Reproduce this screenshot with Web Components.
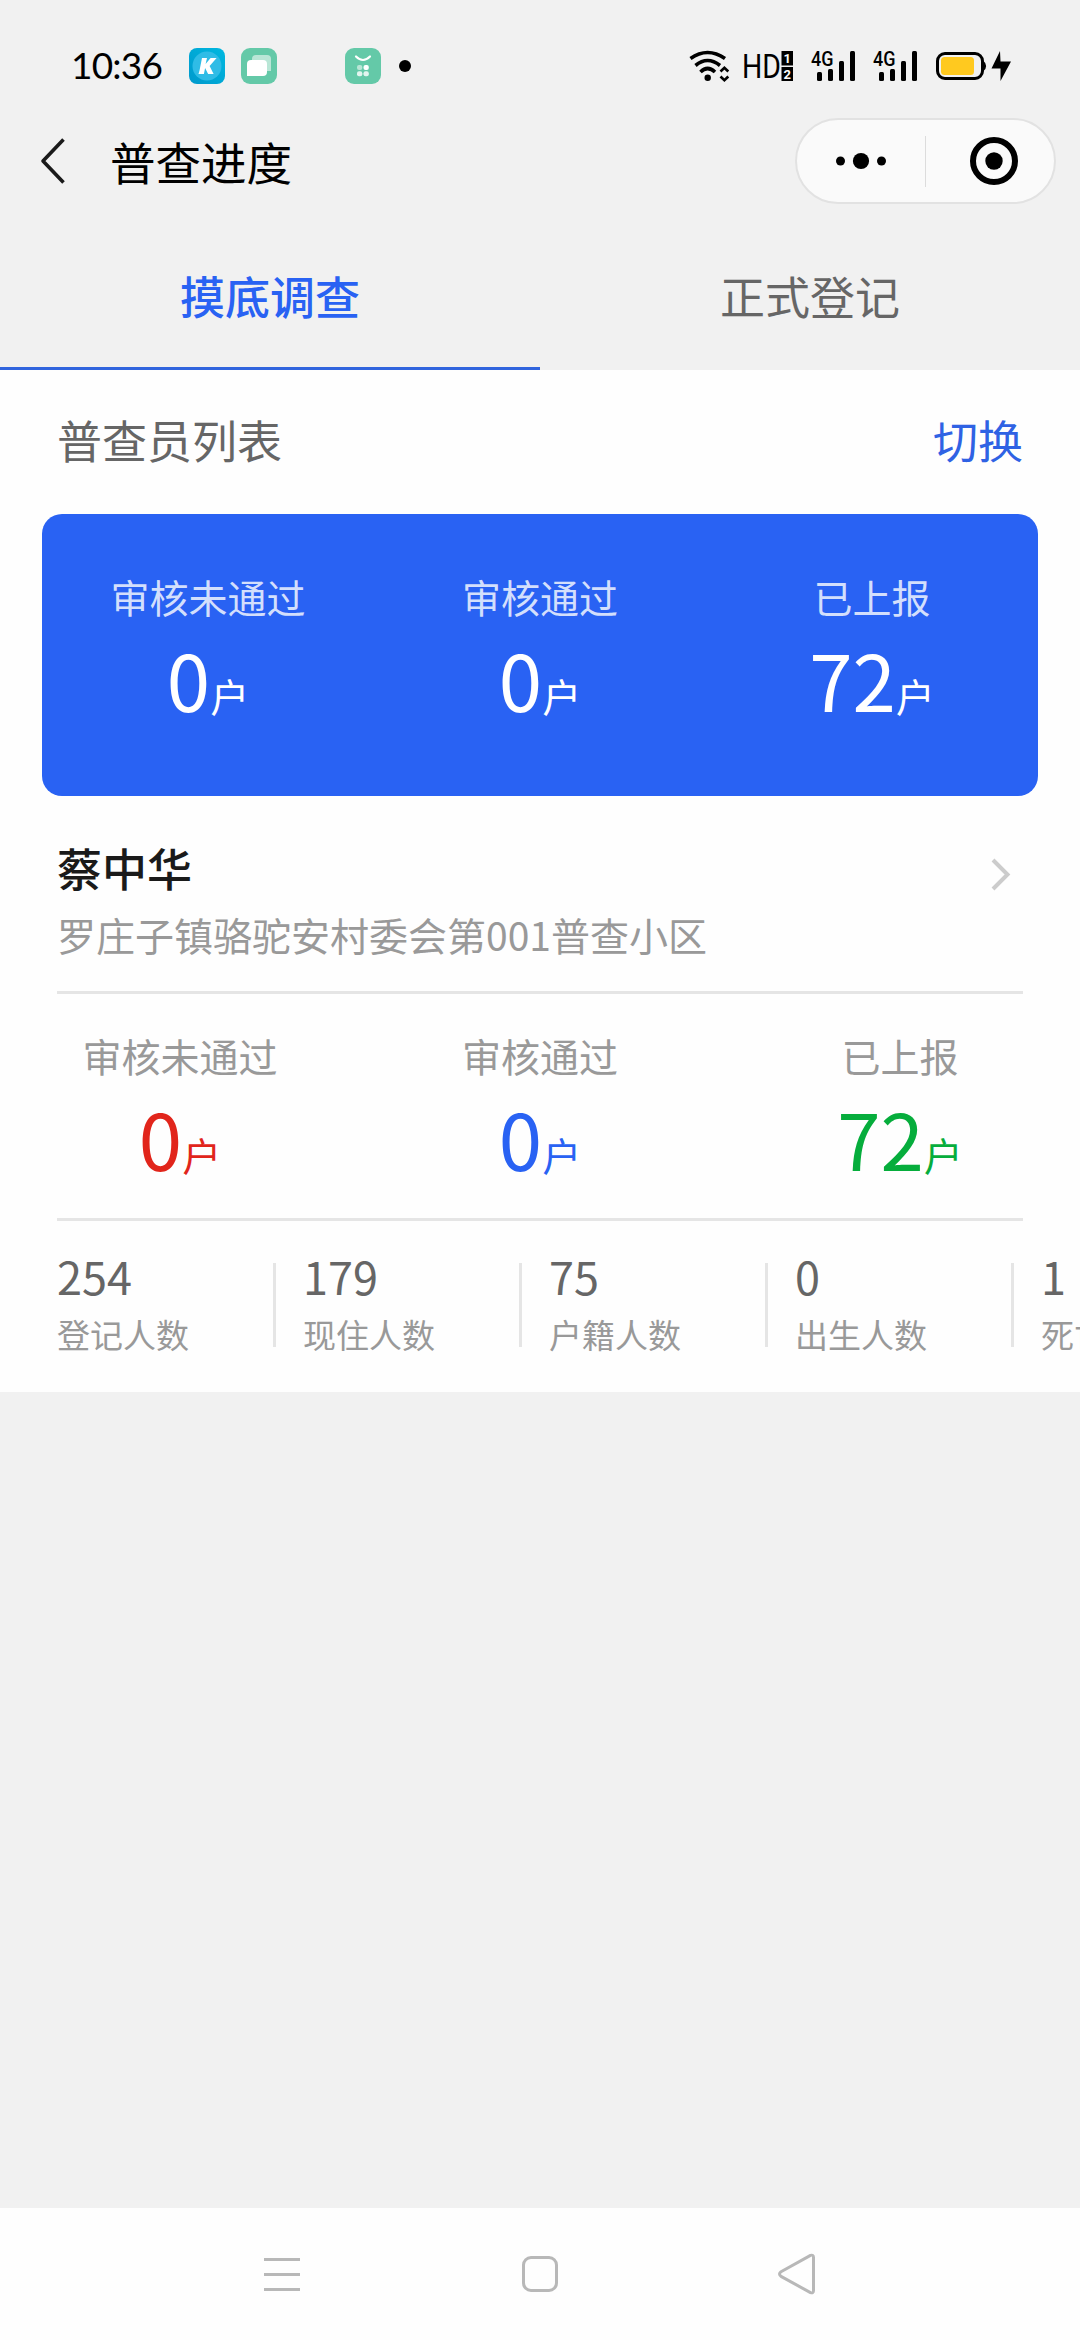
<!DOCTYPE html>
<html lang="zh-CN">
<head>
<meta charset="utf-8">
<meta name="viewport" content="width=device-width, initial-scale=1">
<title>普查进度</title>
<style>
html, body { margin: 0; padding: 0; }
body {
  background: #f1f1f1;
  font-family: "Noto Sans CJK SC", "Noto Sans", sans-serif;
  color: #666;
  overflow: hidden;
}
</style>
</head>
<body>
<census-app></census-app>
<script>
function define(name, css, html) {
  customElements.define(name, class extends HTMLElement {
    constructor() {
      super();
      this.attachShadow({ mode: 'open' }).innerHTML =
        '<style>*{box-sizing:border-box}svg{display:block;flex:none;overflow:visible}' + css + '</style>' + html;
    }
  });
}

/* One 4G label above four rising bars */
define('signal-icon', ':host{display:block}', `
  <svg width="44" height="32" viewBox="0 0 44 32">
    <text x="0" y="15.5" font-family="Roboto, sans-serif" font-size="19.5" font-weight="500" textLength="22.500" lengthAdjust="spacingAndGlyphs">4G</text>
    <rect x="6" y="22" width="5" height="9" rx="1.5"/>
    <rect x="17" y="19" width="5" height="12" rx="1.5"/>
    <rect x="28" y="11" width="5" height="20" rx="1.5"/>
    <rect x="39" y="1" width="5" height="30" rx="1.5"/>
  </svg>`);

define('status-bar', `
  :host{display:flex;align-items:center;height:99px;padding:33px 69px 0 71px;color:#000}
  .time{font:400 37px/44px Lato,sans-serif;width:118px;padding-bottom:2px;letter-spacing:-.8px;white-space:nowrap}
  .apps{display:flex;align-items:center;gap:16px}
  .apps .third{margin-left:52px}
  .dot{width:12px;height:12px;border-radius:50%;background:#000;margin-left:2px}
  .sys{display:flex;align-items:center;margin-left:auto}
  .hd{margin-left:14px}
  signal-icon{margin-left:18px}
  .bat{margin-left:19px}
`, `
  <div class="time">10:36</div>
  <div class="apps">
    <svg width="36" height="36" viewBox="0 0 36 36">
      <defs><linearGradient id="g" x1="0" y1="1" x2="1" y2="0"><stop offset="0" stop-color="#0099cc"/><stop offset="1" stop-color="#00b8e0"/></linearGradient></defs>
      <rect width="36" height="36" rx="8" fill="url(#g)"/>
      <circle cx="18" cy="18" r="14.5" fill="#2fbce6"/>
      <path d="M13 10h5l-1.400 6 5-6h6l-7 8 4 8h-5.500l-3-6-1.200 6H9.500l1-3.500z" fill="#fff"/>
    </svg>
    <svg width="36" height="36" viewBox="0 0 36 36">
      <rect width="36" height="36" rx="9" fill="#64c9a8"/>
      <path d="M11 12v-1a4 4 0 0 1 4-4h11a4 4 0 0 1 4 4v12h-4z" fill="#b9e6d6"/>
      <path d="M6 28V16a4 4 0 0 1 4-4h12a4 4 0 0 1 4 4v8a4 4 0 0 1-4 4z" fill="#fff"/>
    </svg>
    <svg class="third" width="36" height="36" viewBox="0 0 36 36">
      <rect width="36" height="36" rx="9" fill="#64c9a8"/>
      <path d="M11 8.500q7 7 14 0" fill="none" stroke="#fff" stroke-width="2.200" stroke-linecap="round"/>
      <rect x="12" y="17" width="5.300" height="5" rx="2" fill="#b9e6d6"/>
      <rect x="18.500" y="17" width="5.300" height="5" rx="2" fill="#fff"/>
      <rect x="12" y="23.300" width="5.300" height="5" rx="2" fill="#e3f5ef"/>
      <rect x="18.500" y="23.300" width="5.300" height="5" rx="2" fill="#e3f5ef"/>
    </svg>
    <div class="dot"></div>
  </div>
  <div class="sys">
    <svg width="41" height="32" viewBox="0 0 41 32">
      <g fill="none" stroke="#000" stroke-width="3.600">
        <path d="M1.500 8.500Q18.500-3.500 36 8.500"/>
        <path d="M6.500 15.500Q18.500 5.500 31 15.500"/>
        <path d="M11.500 22Q18.500 15 26 22"/>
      </g>
      <circle cx="18.700" cy="27.800" r="3.200"/>
      <path d="M31.500 21.500l3.900-3.800 3.900 3.800M31.500 26.500l3.900 3.800 3.900-3.800" fill="none" stroke="#000" stroke-width="2.600"/>
    </svg>
    <svg class="hd" width="49" height="32" viewBox="0 0 49 32">
      <text x="-2" y="28" font-family="Roboto, sans-serif" font-size="33" textLength="39" lengthAdjust="spacingAndGlyphs">HD</text>
      <rect x="37.500" y="1" width="11.500" height="14.500"/>
      <rect x="37.500" y="17" width="11.500" height="14"/>
      <text x="43.300" y="12.800" text-anchor="middle" fill="#fff" font-family="Roboto, sans-serif" font-weight="700" font-size="13">1</text>
      <text x="43.300" y="28.800" text-anchor="middle" fill="#fff" font-family="Roboto, sans-serif" font-weight="700" font-size="13">2</text>
    </svg>
    <signal-icon></signal-icon>
    <signal-icon></signal-icon>
    <svg class="bat" width="75" height="32" viewBox="0 0 75 32">
      <rect x="1.500" y="3.500" width="45" height="25" rx="7.500" fill="none" stroke="#000" stroke-width="3"/>
      <path d="M47.500 11q2.600 2 2.600 5t-2.600 5z"/>
      <rect x="5" y="7" width="33" height="18" rx="3.500" fill="#ffc91f"/>
      <path d="M64 1L55.500 18.500h9L64.500 31 75 11.500h-10.500z"/>
    </svg>
  </div>`);

define('mini-capsule', `
  :host{display:flex;align-items:center;width:261px;height:86px;border:2px solid #e2e2e2;border-radius:43px;background:#fafafa;box-sizing:border-box}
  div{display:flex;justify-content:center}
  .more{flex:none;width:129px;padding-right:1px;border-right:1px solid #dcdcdc;height:51px;align-items:center}
  .close{flex:1;padding-left:8px}
`, `
  <div class="more"><svg width="52" height="18" viewBox="0 0 52 18"><circle cx="5.500" cy="9" r="4.500"/><circle cx="26" cy="9" r="8.100"/><circle cx="46.500" cy="9" r="4.500"/></svg></div>
  <div class="close"><svg width="48" height="48" viewBox="0 0 48 48"><circle cx="24" cy="24" r="21" fill="none" stroke="#000" stroke-width="6"/><circle cx="24" cy="24" r="8.700"/></svg></div>`);

define('nav-header', `
  :host{display:flex;align-items:center;height:124px;padding:0 24px 0 40px;color:#000}
  h1{margin:0 0 0 44px;font:400 45.5px/60px "Noto Sans CJK SC",sans-serif}
  mini-capsule{margin-left:auto}
`, `
  <svg width="26" height="48" viewBox="0 0 26 48"><path d="M23.500 2.500L3 24l20.500 21.500" fill="none" stroke="#1a1a1a" stroke-width="3.600" stroke-linejoin="round"/></svg>
  <h1><slot></slot></h1>
  <mini-capsule></mini-capsule>`);

define('tab-item', `
  :host{flex:1;display:flex;align-items:center;justify-content:center;height:147px;padding-top:2px;border-bottom:3px solid transparent;font-size:45px;line-height:60px;box-sizing:border-box;color:#666}
  :host([active]){color:#2962f3;font-weight:500;border-color:#3165de}
`, '<slot></slot>');

define('tab-bar', ':host{display:flex}', '<slot></slot>');

/* Label over a large count with its unit; colours come from custom properties */
define('count-stat', `
  :host{flex:1;display:flex;flex-direction:column;align-items:center}
  .label{font-size:39px;line-height:56px;color:var(--label,#999)}
  .value{height:108px;line-height:108px;font-size:78px;color:var(--value,#666);white-space:nowrap}
  .unit{font-size:39px;line-height:1}
`, `
  <div class="label"><slot name="label"></slot></div>
  <div class="value"><slot></slot><span class="unit">户</span></div>`);

define('summary-card', `
  :host{display:flex;margin:0 42px;height:282px;padding-top:54px;box-sizing:border-box;border-radius:20px;background:#2962f3;--label:#d3dffc;--value:#fff}
`, '<slot></slot>');

define('section-header', `
  :host{display:flex;justify-content:space-between;align-items:center;height:139px;margin-bottom:5px;padding:0 57px;font-size:45px;line-height:60px;color:#666}
  a{color:#2f62e4}
`, '<span><slot></slot></span><a><slot name="action"></slot></a>');

define('person-row', `
  :host{display:flex;justify-content:space-between;margin:0 57px;padding:38px 11px 0 0;height:198px;box-sizing:border-box;border-bottom:3px solid #e5e5e5}
  .name{font-size:45px;line-height:68px;font-weight:500;color:#1a1a1a}
  .area{font-size:39px;line-height:64px;color:#999;white-space:nowrap}
  svg{margin-top:22px}
`, `
  <div><div class="name"><slot></slot></div><div class="area"><slot name="area"></slot></div></div>
  <svg width="22" height="36" viewBox="0 0 22 36"><path d="M3 4l14.500 14.500L3 33" fill="none" stroke="#ccc" stroke-width="4"/></svg>`);

define('count-row', `
  :host{display:block;height:227px}
  .cols{display:flex;height:224px;padding-top:33px}
  .rule{height:3px;margin:0 57px;background:#e5e5e5}
`, '<div class="cols"><slot></slot></div><div class="rule"></div>');

define('people-stat', `
  :host{flex:none;width:219px;display:flex;justify-content:space-between;align-items:flex-start;white-space:nowrap}
  .num{font-size:45px;line-height:60px;color:#666}
  .cap{font-size:33px;line-height:56px;color:#999}
  i{width:3px;height:84px;margin-top:17px;background:#e5e5e5}
`, '<div><div class="num"><slot></slot></div><div class="cap"><slot name="cap"></slot></div></div><i></i>');

define('people-strip', `
  :host{display:flex;gap:27px;height:171px;padding:25px 0 0 57px;box-sizing:border-box;overflow:hidden}
`, '<slot></slot>');

define('system-nav', `
  :host{display:flex;justify-content:center;align-items:center;gap:218px;height:132px;background:#fefefe}
`, `
  <svg width="40" height="44" viewBox="0 0 40 44"><path d="M2 7.500h36M2 22.500h36M2 37.500h36" stroke="#b8b8b8" stroke-width="3"/></svg>
  <svg width="40" height="44" viewBox="0 0 40 44"><rect x="3.500" y="5.500" width="33" height="33" rx="7.500" fill="none" stroke="#b8b8b8" stroke-width="3"/></svg>
  <svg width="40" height="44" viewBox="0 0 40 44"><path d="M32.500 3.400L3 19.800q-3 2.200 0 4.600l29.500 16.200q3 1 3-2V5.400q0-3-3-2z" fill="none" stroke="#b8b8b8" stroke-width="3" stroke-linejoin="round"/></svg>`);

define('census-app', `
  :host{display:flex;flex-direction:column;width:1080px;height:2340px;background:#f1f1f1;overflow:hidden}
  main{background:#fefefe;height:1022px}
  system-nav{margin-top:auto}
  .no{--value:#e1251b}.ok{--value:#2962f3}.up{--value:#06ad3c}
`, `
  <status-bar></status-bar>
  <nav-header>普查进度</nav-header>
  <tab-bar><tab-item active>摸底调查</tab-item><tab-item>正式登记</tab-item></tab-bar>
  <main>
    <section-header>普查员列表<span slot="action">切换</span></section-header>
    <summary-card>
      <count-stat><span slot="label">审核未通过</span>0</count-stat>
      <count-stat><span slot="label">审核通过</span>0</count-stat>
      <count-stat><span slot="label">已上报</span>72</count-stat>
    </summary-card>
    <person-row>蔡中华<span slot="area">罗庄子镇骆驼安村委会第001普查小区</span></person-row>
    <count-row>
      <count-stat class="no"><span slot="label">审核未通过</span>0</count-stat>
      <count-stat class="ok"><span slot="label">审核通过</span>0</count-stat>
      <count-stat class="up"><span slot="label">已上报</span>72</count-stat>
    </count-row>
    <people-strip>
      <people-stat>254<span slot="cap">登记人数</span></people-stat>
      <people-stat>179<span slot="cap">现住人数</span></people-stat>
      <people-stat>75<span slot="cap">户籍人数</span></people-stat>
      <people-stat>0<span slot="cap">出生人数</span></people-stat>
      <people-stat>1<span slot="cap">死亡人数</span></people-stat>
    </people-strip>
  </main>
  <system-nav></system-nav>`);
</script>
</body>
</html>
